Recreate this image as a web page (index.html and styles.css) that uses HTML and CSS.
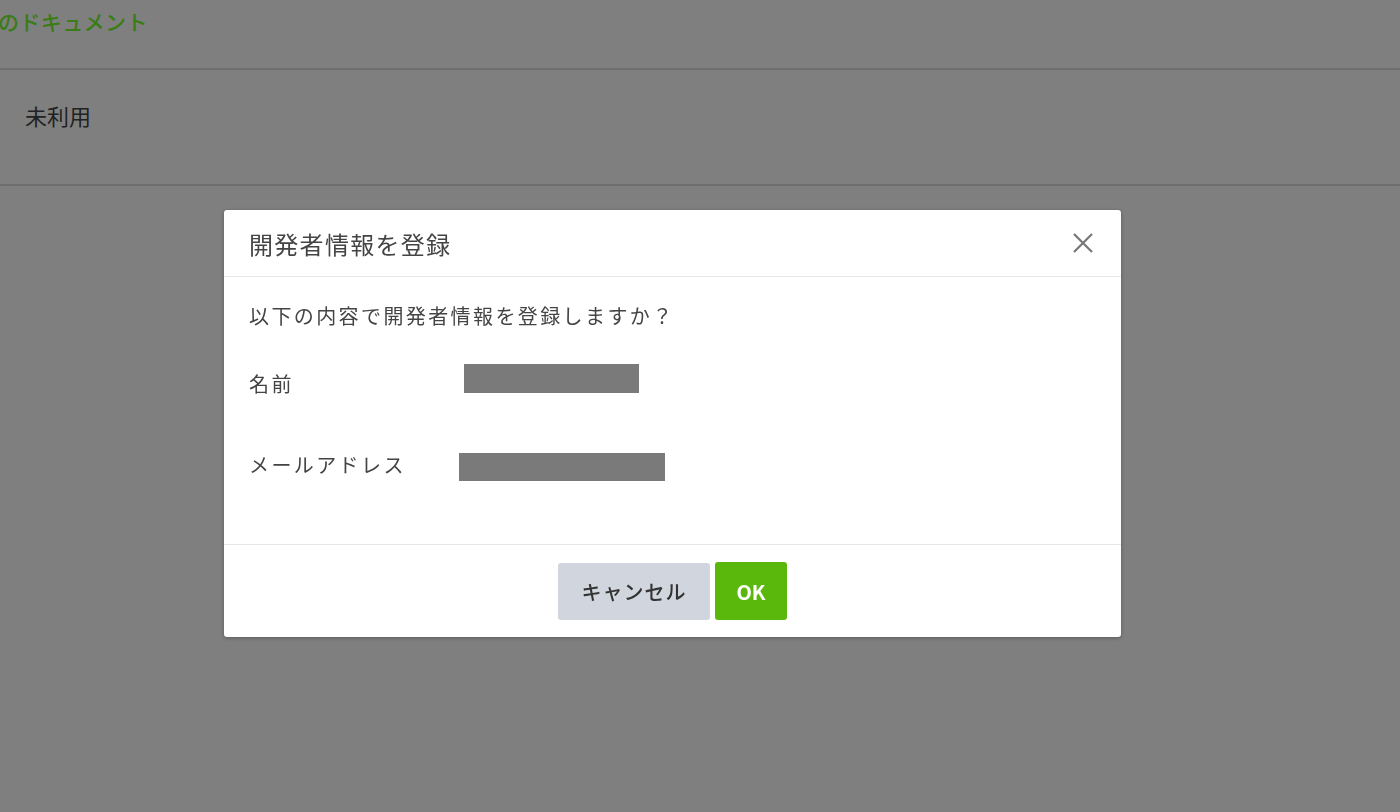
FILE: index.html
```html
<!DOCTYPE html>
<html lang="ja">
<head>
  <meta charset="UTF-8" />
  <title>開発者情報を登録</title>
  <link rel="stylesheet" href="styles.css">
</head>
<body>
  <div class="page">
    <div class="doc-tab">
      <a class="doc-link" href="#">のドキュメント</a>
    </div>
    <div class="status-row">
      <span class="status-text">未利用</span>
    </div>
  </div>

  <!-- 確認ダイアログ -->
  <div class="backdrop">
    <div class="dialog">
      <div class="dialog-header">
        <h2>開発者情報を登録</h2>
        <button class="close-btn" aria-label="閉じる">
          <svg width="22" height="22" viewBox="0 0 22 22">
            <path d="M2 2 L20 20 M20 2 L2 20" stroke="#777" stroke-width="2.2" fill="none" />
          </svg>
        </button>
      </div>

      <div class="dialog-body">
        <p class="lead">以下の内容で開発者情報を登録しますか？</p>
        <div class="field">
          <span class="field-label">名前</span>
          <span class="masked masked-name"></span>
        </div>
        <div class="field">
          <span class="field-label">メールアドレス</span>
          <span class="masked masked-mail"></span>
        </div>
      </div>

      <div class="dialog-footer">
        <button class="btn btn-cancel">キャンセル</button>
        <button class="btn btn-ok">OK</button>
      </div>
    </div>
  </div>
</body>
</html>
```

FILE: styles.css
```css
* {
  box-sizing: border-box;
}

body {
  margin: 0;
  font-family: "Noto Sans CJK JP", "Noto Sans", sans-serif;
  background-color: #ffffff;
  color: #444;
}

.page {
  width: 100%;
}

.doc-tab {
  height: 70px;
  border-bottom: 2px solid #dddddd;
  padding-top: 6px;
  margin-left: -2px;
}

.doc-link {
  font-size: 21px;
  font-weight: 500;
  color: #74f82c;
  text-decoration: none;
  letter-spacing: 0.4px;
}

.status-row {
  height: 116px;
  border-bottom: 2px solid #dddddd;
  padding: 29px 25px;
}

.status-text {
  font-size: 22px;
  color: #444;
}

.backdrop {
  position: fixed;
  top: 0;
  left: 0;
  width: 100%;
  height: 100%;
  background: rgba(0, 0, 0, 0.5);
  padding: 210px 0 0 224px;
}

.dialog {
  width: 897px;
  background: #fff;
  border-radius: 3px;
  box-shadow: 0 1px 4px rgba(0, 0, 0, 0.3);
}

.dialog-header {
  height: 67px;
  display: flex;
  align-items: center;
  justify-content: space-between;
  padding: 0 27px 0 25px;
  border-bottom: 1px solid #e6e6e6;
}

.dialog-header h2 {
  margin: 0;
  font-size: 24px;
  font-weight: normal;
  letter-spacing: 1.3px;
  color: #444;
}

.close-btn {
  border: none;
  background: none;
  padding: 0;
  display: flex;
  cursor: pointer;
}

.dialog-body {
  padding: 24px 25px 60px;
  font-size: 20px;
  letter-spacing: 2.4px;
  color: #444;
}

.lead {
  margin: 0 0 33px;
}

.field {
  display: flex;
  align-items: center;
  height: 40px;
  margin-bottom: 41px;
}

.field:last-child {
  margin-bottom: 0;
}

.field-label {
  width: 210px;
  flex-shrink: 0;
}

.masked {
  display: block;
  height: 29px;
  background: #7a7a7a;
}

.masked-name {
  width: 175px;
  margin-left: 5px;
  margin-top: -9px;
}

.masked-mail {
  width: 206px;
  height: 28px;
  margin-top: 6px;
}

.dialog-footer {
  border-top: 1px solid #e6e6e6;
  padding: 17px 0 17px;
  display: flex;
  justify-content: center;
  gap: 5px;
}

.btn {
  height: 57px;
  border: none;
  border-radius: 3px;
  font-family: inherit;
  font-size: 20px;
  font-weight: 500;
  cursor: pointer;
}

.btn-cancel {
  width: 152px;
  margin-top: 1px;
  background: #d1d5dd;
  color: #333;
  letter-spacing: 1px;
}

.btn-ok {
  width: 72px;
  height: 58px;
  background: #5ab80c;
  color: #fff;
  font-weight: bold;
}
```
